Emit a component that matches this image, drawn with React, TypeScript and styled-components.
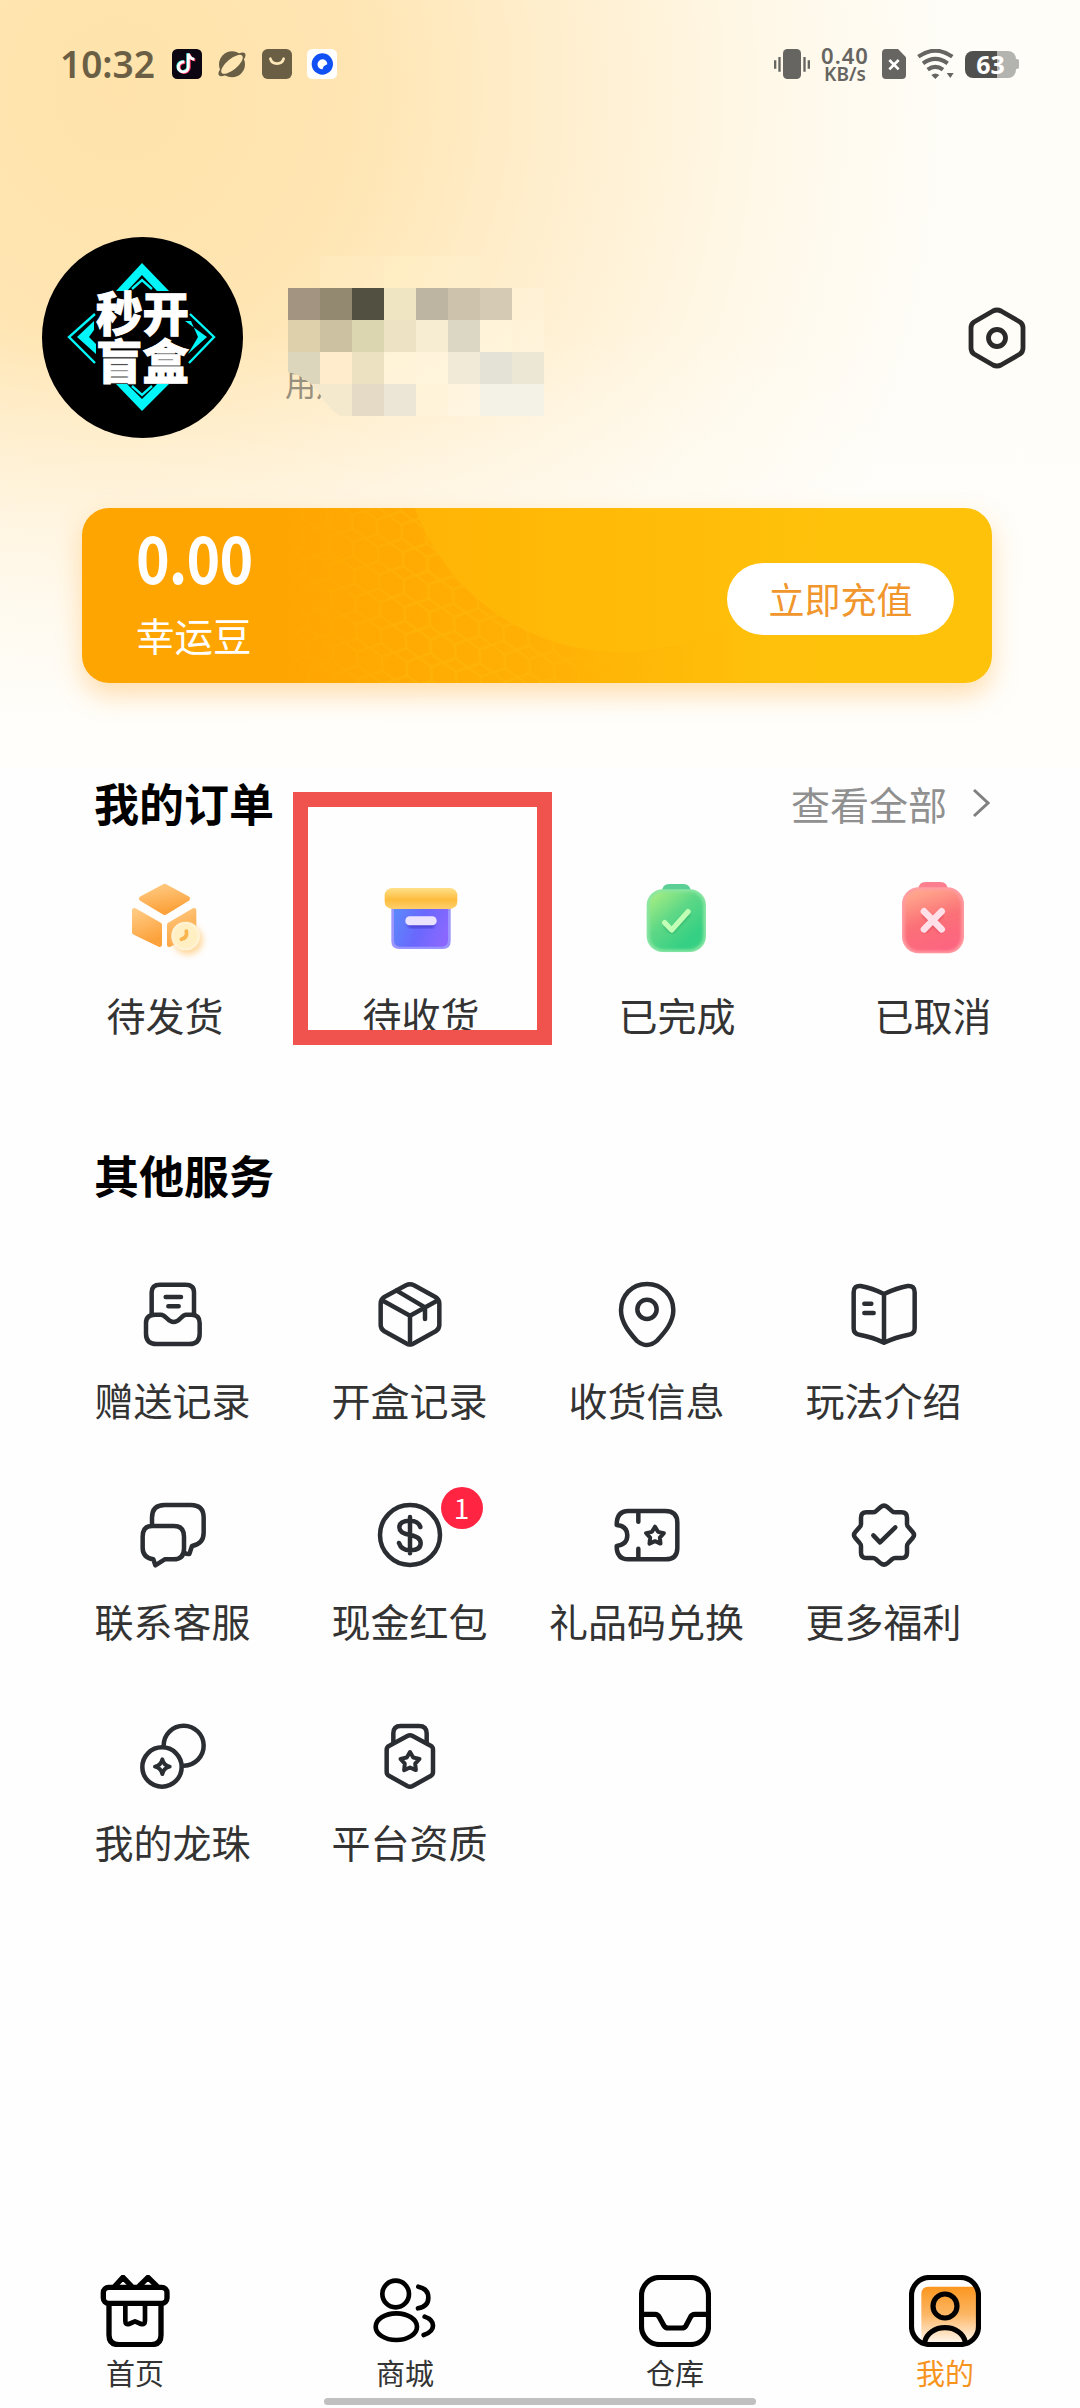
import React from "react";
import styled, { createGlobalStyle } from "styled-components";

const GlobalStyle = createGlobalStyle`
  * { box-sizing: border-box; }
  body { margin: 0; background: #fff; }
`;

const Page = styled.main`
  width: 1080px;
  height: 2408px;
  display: flex;
  flex-direction: column;
  overflow: hidden;
  font-family: "Noto Sans CJK SC", "Noto Sans", sans-serif;
  color: #333;
  background:
    linear-gradient(180deg, rgba(255, 255, 255, 0) 0, rgba(255, 255, 255, 0) 330px, #fffefb 740px, #fffefb 768px, #fefefe 769px),
    radial-gradient(ellipse 830px 900px at 120px 90px, #ffe3ab 0%, #ffe5b2 28%, #ffeecd 52%, #fff8e8 78%, #fffdf8 100%);
`;

/* ---------- status bar ---------- */

const StatusBar = styled.header`
  height: 128px;
  padding: 0 61px 0 60px;
  display: flex;
  align-items: center;
  justify-content: space-between;
`;

const StatusLeft = styled.div`
  display: flex;
  align-items: center;
  gap: 15px;
`;

const StatusRight = styled.div`
  display: flex;
  align-items: center;
`;

const Clock = styled.span`
  width: 97px;
  font: 600 37px/48px "Noto Sans", sans-serif;
  color: #6a5f45;
  white-space: nowrap;
`;

const Speed = styled.div`
  width: 52px;
  margin: 0 11px 0 9px;
  text-align: center;
  color: #666561;
  font-family: "Noto Sans", sans-serif;
  font-weight: 600;
`;

const SpeedValue = styled.div`
  font-size: 22px;
  line-height: 19px;
  letter-spacing: 1px;
`;

const SpeedUnit = styled.div`
  font-size: 19px;
  line-height: 18px;
`;

const Wifi = styled.svg`
  margin: 0 11px 0 11px;
`;

const Battery = styled.div`
  display: flex;
  align-items: center;
`;

const BatteryBody = styled.div`
  width: 51px;
  height: 27px;
  border-radius: 8px;
  background: linear-gradient(90deg, #50504e 63%, #b3b3b0 63%);
  color: #fff;
  font: 700 25px/27px "Noto Sans", sans-serif;
  text-align: center;
`;

const BatteryTip = styled.div`
  width: 3px;
  height: 10px;
  border-radius: 0 2px 2px 0;
  background: #b3b3b0;
`;

/* ---------- profile ---------- */

const Profile = styled.section`
  margin-top: 109px;
  height: 201px;
  padding: 0 54px 0 42px;
  display: flex;
  align-items: center;
`;

const Avatar = styled.div`
  position: relative;
  width: 201px;
  height: 201px;
  border-radius: 50%;
  background: #000;
  display: flex;
  flex-direction: column;
  align-items: center;
  justify-content: center;
`;

const AvatarFrame = styled.svg`
  position: absolute;
  inset: 0;
`;

const AvatarText = styled.span`
  position: relative;
  font-size: 46.5px;
  line-height: 48px;
  font-weight: 900;
  color: #fff;
  -webkit-text-stroke: 0.9px #fff;
  top: -3px;
`;

const UserInfo = styled.div`
  position: relative;
  margin-left: 42px;
  width: 300px;
  height: 201px;
  padding-top: 124px;
`;

const UserId = styled.div`
  font-size: 31px;
  line-height: 44px;
  color: #97907f;
`;

const Mosaic = styled.div`
  position: absolute;
  left: 3px;
  top: 19px;
  display: grid;
  grid-template-columns: repeat(8, 32px);
  grid-auto-rows: 32px;
  clip-path: polygon(0 0, 256px 0, 256px 160px, 53px 160px, 45px 155px, 38px 147px, 31px 137px, 22px 127px, 10px 119px, 0 116px);
`;

const MosaicCell = styled.i<{ $color: string }>`
  background: ${(p) => p.$color};
`;

const SettingsButton = styled.button`
  margin-left: auto;
  padding: 0;
  border: 0;
  background: none;
  display: flex;
`;

/* ---------- balance ---------- */

const Balance = styled.section`
  position: relative;
  margin: 70px 88px 0 82px;
  height: 175px;
  flex: none;
  border-radius: 27px;
  background: linear-gradient(90deg, #ffa502 0%, #ffa502 22%, #ffb004 50%, #ffc00b 74%, #ffc20b 82%);
  box-shadow: 0 12px 26px rgba(255, 170, 50, 0.36);
  display: flex;
  align-items: center;
  justify-content: space-between;
  padding: 0 38px 0 54px;
`;

const BalancePattern = styled.svg`
  position: absolute;
  inset: 0;
  border-radius: 27px;
`;

const BalanceInfo = styled.div`
  position: relative;
  margin-top: -10px;
  color: #fff;
`;

const Amount = styled.div`
  font-size: 65px;
  line-height: 76px;
  font-weight: 700;
  letter-spacing: -1px;
  transform: scaleX(0.88);
  transform-origin: left center;
`;

const Currency = styled.div`
  margin-top: 11px;
  font-size: 38.5px;
  line-height: 58px;
`;

const RechargeButton = styled.button`
  position: relative;
  width: 227px;
  height: 72px;
  margin-top: 7px;
  padding: 0 0 3px;
  border: 0;
  border-radius: 36px;
  background: #fff;
  color: #f0962d;
  font-family: inherit;
  font-size: 36px;
  line-height: 60px;
`;

/* ---------- sections ---------- */

const SectionHead = styled.div<{ $top: number }>`
  margin-top: ${(p) => p.$top}px;
  padding: 0 90px 0 94px;
  height: 60px;
  flex: none;
  display: flex;
  align-items: center;
  justify-content: space-between;
`;

const SectionTitle = styled.h2`
  margin: 0;
  font-size: 45px;
  line-height: 60px;
  font-weight: 700;
  color: #000;
`;

const ViewAll = styled.a`
  display: flex;
  align-items: center;
  gap: 25px;
  color: #909090;
  font-size: 39px;
  line-height: 60px;
`;

const Orders = styled.div`
  margin: 42px 18px 0 37px;
  display: grid;
  grid-template-columns: repeat(4, 256px);
`;

const OrderItem = styled.div`
  position: relative;
  display: flex;
  flex-direction: column;
  align-items: center;
  gap: 19px;
`;

const Label = styled.span`
  font-size: 39px;
  line-height: 60px;
  white-space: nowrap;
`;

const Highlight = styled.div`
  position: absolute;
  left: 0;
  top: -83px;
  width: 259px;
  height: 253px;
  border: 15px solid #f0524d;
`;

const Services = styled.div`
  margin: 73px 78px 0 54px;
  display: grid;
  grid-template-columns: repeat(4, 237px);
  row-gap: 70px;
`;

const ServiceItem = styled.div`
  display: flex;
  flex-direction: column;
  align-items: center;
  gap: 19px;
`;

const IconWrap = styled.div`
  position: relative;
  height: 72px;
`;

const Badge = styled.span`
  position: absolute;
  left: 67px;
  top: -12px;
  width: 42px;
  height: 42px;
  border-radius: 50%;
  background: #ff2442;
  color: #fff;
  font-size: 28px;
  line-height: 41px;
  text-align: center;
`;

/* ---------- tab bar ---------- */

const TabBar = styled.nav`
  margin-top: auto;
  display: grid;
  grid-template-columns: repeat(4, 1fr);
`;

const Tab = styled.div<{ $active?: boolean }>`
  display: flex;
  flex-direction: column;
  align-items: center;
  gap: 4px;
  color: ${(p) => (p.$active ? "#f7941e" : "#333")};
  font-size: 29px;
  line-height: 42px;
`;

const HomeIndicator = styled.div`
  width: 432px;
  height: 7px;
  margin: 5px auto 3px;
  flex: none;
  border-radius: 4px;
  background: #c0c0c0;
`;

/* ---------- drawings ---------- */

const star = (cx: number, cy: number, r: number, inner = 0.55) =>
  Array.from({ length: 10 }, (_, i) => {
    const radius = i % 2 ? r * inner : r;
    const a = -Math.PI / 2 + (i * Math.PI) / 5;
    return `${i ? "L" : "M"}${(cx + radius * Math.cos(a)).toFixed(1)} ${(cy + radius * Math.sin(a)).toFixed(1)}`;
  }).join("") + "Z";

const LineIcon = ({ x, y, width = 13.5, color = "#2a2e33", children }: {
  x: number; y: number; width?: number; color?: string; children: React.ReactNode;
}) => (
  <svg width="72" height="72" viewBox={`${x} ${y} 216 216`} fill="none" stroke={color}
    strokeWidth={width} strokeLinecap="round" strokeLinejoin="round">{children}</svg>
);

const services = [
  { label: "赠送记录", icon: (
    <LineIcon x={171} y={55}>
      <path d="M215 162V98Q215 75 240 75H316Q342 75 342 98V162" />
      <path d="M225 165H243C258 165 262 187 281 187C300 187 304 165 318 165H335Q359 165 359 190V222Q359 253 328 253H230Q198 253 198 222V190Q198 165 225 165Z" />
      <path d="M257 112H303M265 140H296" />
    </LineIcon>) },
  { label: "开盒记录", icon: (
    <LineIcon x={882} y={55}>
      <path d="M978 77Q990 71 1002 77L1066 112Q1078 119 1078 132V196Q1078 208 1067 215L1002 251Q990 258 978 251L913 215Q902 208 902 196V132Q902 119 913 112Z" />
      <path d="M906 122L990 168L1074 122M990 168V254M950 93L1035 143V178" />
    </LineIcon>) },
  { label: "收货信息", icon: (
    <LineIcon x={273} y={55}>
      <path d="M381 73C335 73 303 108 303 152C303 190 330 220 350 243Q367 256 381 256Q396 256 411 243C432 220 460 190 460 152C460 108 427 73 381 73Z" />
      <circle cx="381" cy="149" r="29" />
    </LineIcon>) },
  { label: "玩法介绍", icon: (
    <LineIcon x={984} y={55}>
      <path d="M1092 103C1070 92 1045 83 1022 79Q1001 77 1001 98V206Q1001 223 1018 225C1045 230 1070 238 1092 249C1115 238 1140 230 1166 225Q1184 223 1184 206V98Q1184 77 1163 79C1140 83 1115 92 1092 103V249" />
      <path d="M1033 132H1054M1033 160H1061" />
    </LineIcon>) },
  { label: "联系客服", icon: (
    <LineIcon x={171} y={719}>
      <path d="M216 798V775Q216 737 254 737H332Q371 737 371 775V820Q371 853 336 860L328 884Q320 885 314 880" />
      <path d="M216 800H282Q312 800 312 832V868Q312 900 280 900H254L226 918L220 900Q188 895 188 866V832Q188 800 216 800Z" />
    </LineIcon>) },
  { label: "现金红包", badge: "1", icon: (
    <LineIcon x={882} y={719}>
      <circle cx="990" cy="827" r="90" />
      <path d="M1021 803Q1015 784 990 784Q958 784 958 804Q958 822 990 827Q1022 832 1022 852Q1022 873 990 873Q964 873 957 851M990 773V882" />
    </LineIcon>) },
  { label: "礼品码兑换", icon: (
    <LineIcon x={273} y={719}>
      <path d="M290 797Q290 755 325 755H435Q472 755 472 790V865Q472 900 437 900H325Q290 900 290 860Q322 856 322 828Q322 800 290 797Z" />
      <path d="M355 760V787M355 868V895" />
      <path d={star(405, 830, 28)} strokeWidth="12" />
    </LineIcon>) },
  { label: "更多福利", icon: (
    <LineIcon x={984} y={719}>
      <path d="M1082 743Q1092 735 1102 743L1117 756Q1120 759 1126 759H1145Q1161 759 1161 775V793Q1161 799 1165 803L1178 818Q1186 827 1178 836L1165 851Q1161 855 1161 861V880Q1161 896 1145 896H1126Q1120 896 1117 899L1102 912Q1092 920 1082 912L1067 899Q1064 896 1058 896H1039Q1023 896 1023 880V861Q1023 855 1019 851L1006 836Q998 827 1006 818L1019 803Q1023 799 1023 793V775Q1023 759 1039 759H1058Q1064 759 1067 756Z" />
      <path d="M1060 828L1080 849L1126 804" />
    </LineIcon>) },
  { label: "我的龙珠", icon: (
    <LineIcon x={171} y={62}>
      <circle cx="246" cy="203" r="59" />
      <path d="M251 138A60 60 0 1 1 312 199" />
      <path d="M247 180Q251 198 269 202Q251 206 247 224Q243 206 225 202Q243 198 247 180Z" strokeWidth="12" />
    </LineIcon>) },
  { label: "平台资质", icon: (
    <LineIcon x={882} y={62}>
      <path d="M940 128V102Q940 80 962 80H1017Q1040 80 1040 102V128" />
      <path d="M982 110Q990 106 998 110L1052 139Q1059 143 1059 151V218Q1059 226 1052 230L998 260Q990 264 982 260L928 230Q920 226 920 218V151Q920 143 928 139Z" />
      <path d={star(990, 188, 30)} strokeWidth="12" />
    </LineIcon>) },
];

const orders = [
  { label: "待发货", icon: (
    <svg width="90" height="90" viewBox="120 315 270 270">
      <defs>
        <linearGradient id="cube" x1="0" y1="0" x2="0.3" y2="1"><stop stopColor="#ffcb83" /><stop offset="1" stopColor="#fca23c" /></linearGradient>
        <filter id="glow" x="-40%" y="-40%" width="180%" height="180%"><feGaussianBlur stdDeviation="9" /></filter>
        <filter id="soft"><feGaussianBlur stdDeviation="2" /></filter>
      </defs>
      <g fill="url(#cube)" stroke="url(#cube)" strokeWidth="14" strokeLinejoin="round" filter="url(#soft)">
        <path d="M254 348L323 386L254 428L184 386Z" />
        <path d="M163 421L239 464V524L163 487Z" />
        <path d="M342 421L268 464V524L342 487Z" />
      </g>
      <circle cx="324" cy="510" r="44" fill="#ffd79a" filter="url(#glow)" />
      <circle cx="317" cy="498" r="43" fill="#fff3d6" />
      <circle cx="317" cy="498" r="36" fill="#ffefc2" filter="url(#soft)" />
      <path d="M319 483Q323 503 304 508" fill="none" stroke="#fbb34d" strokeWidth="11" strokeLinecap="round" />
    </svg>) },
  { label: "待收货", highlighted: true, icon: (
    <svg width="90" height="90" viewBox="888 315 270 270">
      <defs>
        <linearGradient id="bin" x1="0" y1="0.3" x2="1" y2="0.6"><stop stopColor="#5c86fb" /><stop offset="0.5" stopColor="#6a68fd" /><stop offset="1" stopColor="#8a68ff" /></linearGradient>
        <linearGradient id="lid" x1="0" y1="0" x2="0" y2="1"><stop stopColor="#ffe08a" /><stop offset="0.55" stopColor="#fdbd3e" /><stop offset="1" stopColor="#ffce6b" /></linearGradient>
        <filter id="inner"><feGaussianBlur stdDeviation="5" /></filter>
      </defs>
      <path d="M934 405H1112V513Q1112 537 1088 537H958Q934 537 934 513Z" fill="#9a95ff" />
      <path d="M942 405H1104V510Q1104 530 1085 530H961Q942 530 942 510Z" fill="url(#bin)" filter="url(#soft)" />
      <rect x="914" y="354" width="218" height="63" rx="22" fill="url(#lid)" />
      <rect x="984" y="455" width="80" height="20" rx="10" fill="#4d43d8" filter="url(#inner)" />
      <rect x="976" y="439" width="94" height="27" rx="13" fill="#ebe2ff" />
    </svg>) },
  { label: "已完成", icon: (
    <svg width="90" height="90" viewBox="188 315 270 270">
      <defs>
        <linearGradient id="done" x1="0.1" y1="0" x2="0.75" y2="0.8"><stop stopColor="#a6ed82" /><stop offset="0.5" stopColor="#5fd886" /><stop offset="1" stopColor="#36d083" /></linearGradient>
        <filter id="edge"><feGaussianBlur stdDeviation="4" /></filter>
      </defs>
      <path d="M278 366Q278 342 300 342H342Q364 342 364 366Z" fill="#5bcf95" />
      <rect x="232" y="358" width="178" height="188" rx="48" fill="#8ae6a4" />
      <rect x="240" y="365" width="162" height="174" rx="42" fill="url(#done)" filter="url(#edge)" />
      <path d="M287 464L307 484L358 430" fill="none" stroke="#2aa866" strokeWidth="12" filter="url(#inner)" />
      <path d="M286 458L307 480L356 425" fill="none" stroke="#c0ffb5" strokeWidth="16" strokeLinecap="round" strokeLinejoin="round" />
    </svg>) },
  { label: "已取消", icon: (
    <svg width="90" height="90" viewBox="955 315 270 270">
      <defs>
        <linearGradient id="cancel" x1="0.3" y1="0" x2="0.6" y2="1"><stop stopColor="#ffa78c" /><stop offset="0.5" stopColor="#fb7177" /><stop offset="1" stopColor="#fd6480" /></linearGradient>
      </defs>
      <path d="M1046 360Q1046 336 1068 336H1112Q1134 336 1134 360Z" fill="#fb7f8e" />
      <rect x="997" y="352" width="186" height="198" rx="50" fill="#ff9ca2" />
      <rect x="1005" y="360" width="170" height="183" rx="44" fill="url(#cancel)" filter="url(#edge)" />
      <path d="M1062 430L1117 485M1117 430L1062 485" stroke="#d93f55" strokeWidth="14" filter="url(#inner)" />
      <path d="M1063 424L1116 478M1116 424L1063 478" stroke="#ffe0e8" strokeWidth="20" strokeLinecap="round" />
    </svg>) },
];

const tabs = [
  { label: "首页", icon: (
    <LineIcon x={55} y={75} width={16} color="#000">
      <rect x="68" y="112" width="191" height="48" rx="16" />
      <path d="M85 162V255Q85 284 115 284H212Q241 284 241 255V162" />
      <path d="M134 165V212Q134 225 145 222L163 214L181 222Q193 225 193 212V165" strokeWidth="14" />
      <path d="M103 108L127 82L152 108M176 108L202 82L228 108" />
    </LineIcon>) },
  { label: "商城", icon: (
    <LineIcon x={867} y={75} width={14} color="#000">
      <circle cx="947" cy="132" r="40" />
      <ellipse cx="949" cy="230" rx="62" ry="40" />
      <path d="M1015 110Q1045 116 1045 143Q1045 169 1014 175M1034 200Q1059 209 1059 227Q1059 245 1031 255" />
    </LineIcon>) },
  { label: "仓库", icon: (
    <LineIcon x={237} y={75} width={15.5} color="#000">
      <rect x="244.5" y="82.5" width="201" height="201" rx="54" />
      <path d="M245 193H285Q294 193 298 202L312 227Q316 234 325 234H365Q374 234 378 227L391 202Q395 193 405 193H445" />
    </LineIcon>) },
  { label: "我的", active: true, icon: (
    <LineIcon x={1047} y={75} width={15.5} color="#000">
      <defs>
        <linearGradient id="mine" x1="0" y1="0" x2="0" y2="1"><stop stopColor="#fb961f" /><stop offset="0.5" stopColor="#fcb766" /><stop offset="1" stopColor="#fff6ec" /></linearGradient>
      </defs>
      <path d="M1084 278V132Q1084 110 1106 110H1247Q1252 120 1252 140V230Q1252 278 1205 278Z" fill="url(#mine)" stroke="none" />
      <rect x="1054.5" y="82.5" width="201" height="201" rx="54" />
      <circle cx="1155" cy="168" r="36" />
      <path d="M1094 276C1100 250 1125 233 1155 233C1185 233 1210 250 1216 276" />
    </LineIcon>) },
];

const mosaic = [
  "transparent #fff1cc55 #fff1cc55 #fff2cc66 #fff2cc66 #fff2cf66 transparent transparent",
  "#a39482 #938870 #525040 #f0e5c3 #bdb5a2 #cdc2ab #d5cab3 #fff5dc66",
  "#ddd0aa #ccc1a1 #dbd6b0 #ede2c3 #f6edd3 #dcd6c4 #fff8e0aa #fff8e666",
  "#dcd6bc #feeccc #ece1c1 #fff6e0aa #fff8e2aa #f0ead7 #e4e1d7 #ece6d5",
  "#f4e9cc #f4e9cc #e5dac5 #ece6d6 #fff6dcaa #fff8e688 #f4f2e6 #f4f2e6",
].join(" ").split(" ");

export default function App() {
  return (
    <Page>
      <GlobalStyle />
      <StatusBar>
        <StatusLeft>
          <Clock>10:32</Clock>
          <svg width="30" height="30" viewBox="0 0 90 90">
            <rect width="90" height="90" rx="16" fill="#0b0611" />
            <g fill="none" strokeWidth="8.5">
              <path d="M37 39A15 15 0 1 0 49 55V14Q53 29 67 31" stroke="#39e5e5" transform="translate(-2 -1)" />
              <path d="M37 39A15 15 0 1 0 49 55V14Q53 29 67 31" stroke="#f5315c" transform="translate(3 2)" />
              <path d="M37 39A15 15 0 1 0 49 55V14Q53 29 67 31" stroke="#fff" />
            </g>
          </svg>
          <svg width="30" height="30" viewBox="0 0 90 90">
            <circle cx="45" cy="46" r="39" fill="#6a5f45" />
            <ellipse cx="45" cy="46" rx="51" ry="17" transform="rotate(-40 45 46)" fill="#6a5f45" />
            <ellipse cx="45" cy="46" rx="40" ry="16" transform="rotate(-40 45 46)" fill="#fee5b1" />
          </svg>
          <svg width="30" height="30" viewBox="0 0 90 90">
            <rect width="90" height="90" rx="17" fill="#6a5f45" />
            <path d="M25 29Q29 44 45 44Q61 44 65 29" fill="none" stroke="#fee7b8" strokeWidth="8" strokeLinecap="round" />
          </svg>
          <svg width="30" height="30" viewBox="0 0 90 90">
            <rect width="90" height="90" rx="16" fill="#fff" />
            <circle cx="46" cy="45" r="32" fill="#1150f5" />
            <path d="M46 31A15 15 0 1 0 47 61Q47 51 61 46A15 15 0 0 0 46 31Z" fill="#fff" />
          </svg>
        </StatusLeft>
        <StatusRight>
          <svg width="36" height="30" viewBox="72 57 108 90" fill="#666561">
            <rect x="99" y="57" width="54" height="90" rx="13" />
            <path d="M85 81h7v44h-7zM72 91h7v25h-7zM160 81h7v44h-7zM173 91h7v25h-7z" />
          </svg>
          <Speed>
            <SpeedValue>0.40</SpeedValue>
            <SpeedUnit>KB/s</SpeedUnit>
          </Speed>
          <svg width="24" height="30" viewBox="396 57 72 90">
            <path d="M408 57H444L468 82V135Q468 147 456 147H408Q396 147 396 135V69Q396 57 408 57Z" fill="#666561" />
            <path d="M418 90L446 118M446 90L418 118" stroke="#fff" strokeWidth="8" />
          </svg>
          <Wifi width="37" height="30" viewBox="504 57 111 90">
            <g fill="none" stroke="#666561" strokeWidth="12">
              <path d="M508 80Q559 44 610 80M522 100Q559 73 596 100M536 119Q559 102 582 119" />
            </g>
            <path d="M547 135Q559 126 571 135L559 147ZM593 129H614L604 144Z" fill="#666561" />
          </Wifi>
          <Battery>
            <BatteryBody>63</BatteryBody>
            <BatteryTip />
          </Battery>
        </StatusRight>
      </StatusBar>

      <Profile>
        <Avatar>
          <AvatarFrame width="201" height="201" viewBox="0 0 201 201">
            <g fill="#00f6f9">
              <path d="M100 26L127 54H115L100 38L85 54H74Z" />
              <path d="M100 174L127 147H115L100 162L85 147H74Z" />
              <path d="M35 100L52 84V93L47 100L54 107V117Z" />
              <path d="M165 100L143 84H149L156 100L146 117Z" />
            </g>
            <g fill="none" stroke="#00f6f9" strokeWidth="2.4">
              <path d="M90 52L100 43L110 52M90 149L100 158L110 149" />
              <path d="M53 77L27 100L53 126M148 77L172 100L147 126" />
            </g>
          </AvatarFrame>
          <AvatarText>秒开</AvatarText>
          <AvatarText>盲盒</AvatarText>
        </Avatar>
        <UserInfo>
          <UserId>用户</UserId>
          <Mosaic>
            {mosaic.map((color, i) => <MosaicCell key={i} $color={color} />)}
          </Mosaic>
        </UserInfo>
        <SettingsButton aria-label="设置">
          <svg width="58" height="62" viewBox="0 0 58 62" fill="none" stroke="#2a2a2a" strokeWidth="4.8" strokeLinejoin="round">
            <path d="M25 4Q29 2 33 4L52 15Q55 17 55 21V41Q55 45 52 47L33 58Q29 60 25 58L6 47Q3 45 3 41V21Q3 17 6 15Z" />
            <circle cx="29" cy="31" r="8.5" />
          </svg>
        </SettingsButton>
      </Profile>

      <Balance>
        <BalancePattern width="910" height="175" viewBox="0 0 910 175">
          <defs>
            <pattern id="mesh" width="24" height="28" patternUnits="userSpaceOnUse" patternTransform="skewX(14) rotate(12)">
              <path d="M0 7L12 0L24 7V21L12 28L0 21Z" fill="none" stroke="#ffb90a" strokeWidth="2.5" />
            </pattern>
            <linearGradient id="fade"><stop offset="0.22" stopColor="#000" /><stop offset="0.38" stopColor="#fff" /><stop offset="0.52" stopColor="#fff" /><stop offset="0.66" stopColor="#000" /></linearGradient>
            <linearGradient id="disc" x1="0" x2="1"><stop stopColor="#ffb405" /><stop offset="0.75" stopColor="#ffbe09" /><stop offset="1" stopColor="#ffc20b" /></linearGradient>
            <mask id="meshMask"><rect width="910" height="175" fill="url(#fade)" /></mask>
          </defs>
          <rect width="910" height="175" fill="url(#mesh)" opacity="0.5" mask="url(#meshMask)" />
          <circle cx="538" cy="-74" r="218" fill="url(#disc)" />
        </BalancePattern>
        <BalanceInfo>
          <Amount>0.00</Amount>
          <Currency>幸运豆</Currency>
        </BalanceInfo>
        <RechargeButton>立即充值</RechargeButton>
      </Balance>

      <SectionHead $top={90}>
        <SectionTitle>我的订单</SectionTitle>
        <ViewAll>
          查看全部
          <svg width="18" height="30" viewBox="0 0 18 30" fill="none" stroke="#808080" strokeWidth="3">
            <path d="M2 2L16 15L2 28" />
          </svg>
        </ViewAll>
      </SectionHead>
      <Orders>
        {orders.map((o) => (
          <OrderItem key={o.label}>
            {o.icon}
            <Label>{o.label}</Label>
            {o.highlighted && <Highlight />}
          </OrderItem>
        ))}
      </Orders>

      <SectionHead $top={101}>
        <SectionTitle>其他服务</SectionTitle>
      </SectionHead>
      <Services>
        {services.map((s) => (
          <ServiceItem key={s.label}>
            <IconWrap>
              {s.icon}
              {s.badge && <Badge>{s.badge}</Badge>}
            </IconWrap>
            <Label>{s.label}</Label>
          </ServiceItem>
        ))}
      </Services>

      <TabBar>
        {tabs.map((t) => (
          <Tab key={t.label} $active={t.active}>
            {t.icon}
            {t.label}
          </Tab>
        ))}
      </TabBar>
      <HomeIndicator />
    </Page>
  );
}
